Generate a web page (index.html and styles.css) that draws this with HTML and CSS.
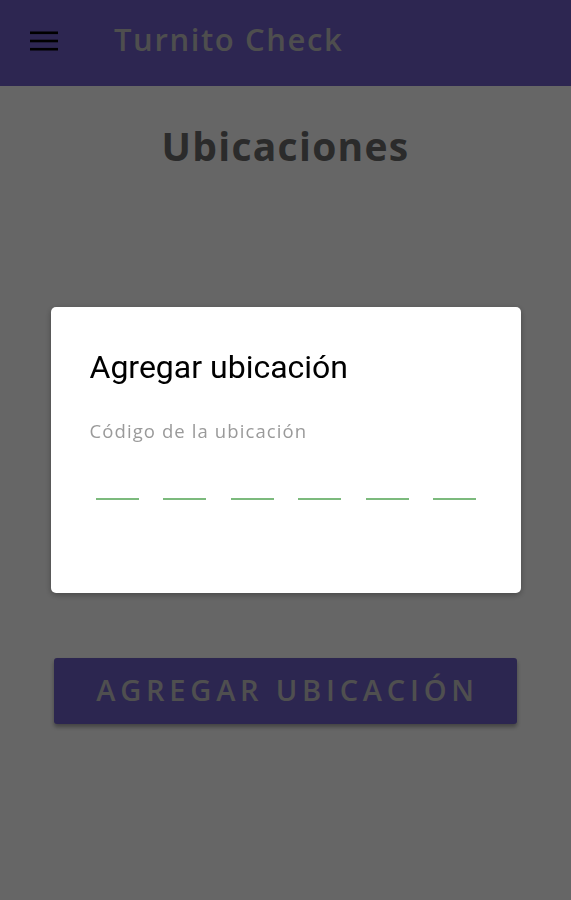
FILE: index.html
```html
<!DOCTYPE html>
<html lang="es">
<head>
<meta charset="utf-8">
<title>Turnito Check</title>
<link rel="stylesheet" href="styles.css">
</head>
<body>
<header class="appbar">
  <button class="menu" aria-label="menu">
    <svg width="28" height="20" viewBox="0 0 28 20"><rect x="0" y="0.5" width="28" height="2.6" fill="#000"/><rect x="0" y="8.7" width="28" height="2.6" fill="#000"/><rect x="0" y="16.9" width="28" height="2.6" fill="#000"/></svg>
  </button>
  <div class="brand">Turnito Check</div>
</header>
<main class="content">
  <h1 class="page-title">Ubicaciones</h1>
  <div class="spacer"></div>
  <button class="primary">AGREGAR UBICACIÓN</button>
</main>
<div class="overlay">
  <div class="dialog">
    <h2 class="dialog-title">Agregar ubicación</h2>
    <div class="label">Código de la ubicación</div>
    <div class="code">
      <span class="dash"></span><span class="dash"></span><span class="dash"></span><span class="dash"></span><span class="dash"></span><span class="dash"></span>
    </div>
  </div>
</div>
</body>
</html>
```
FILE: styles.css
```css
html, body { margin: 0; padding: 0; }
body {
  width: 571px;
  height: 900px;
  background: #ffffff;
  font-family: "Open Sans", "Noto Sans", sans-serif;
  overflow: hidden;
}
.appbar {
  height: 86px;
  background: #715fcb;
  display: flex;
  align-items: center;
  box-sizing: border-box;
  padding-left: 30px;
}
.menu {
  border: 0;
  background: none;
  padding: 0;
  width: 28px;
  height: 20px;
  display: flex;
  margin-top: -4px;
}
.brand {
  margin-left: 56px;
  margin-top: -8px;
  color: #c4c4c4;
  font-size: 31px;
  font-weight: 600;
  letter-spacing: 1.6px;
}
.content {
  display: flex;
  flex-direction: column;
  align-items: center;
}
.page-title {
  margin: 0;
  margin-top: 30px;
  font-size: 39px;
  font-weight: 700;
  line-height: 60px;
  color: #6c6c6c;
  letter-spacing: 1.3px;
}
.spacer { height: 482px; }
.primary {
  width: 463px;
  height: 66px;
  border: 0;
  border-radius: 3px;
  background: #6f5fc8;
  color: #c6c6c6;
  font-family: "Open Sans", "Noto Sans", sans-serif;
  font-size: 29px;
  font-weight: 600;
  letter-spacing: 4.8px;
  box-shadow: 0 3px 4px rgba(0,0,0,0.35);
  padding: 0 0 4px 4px;
}
.overlay {
  position: fixed;
  inset: 0;
  background: rgba(0,0,0,0.6);
  display: flex;
  align-items: center;
  justify-content: center;
}
.dialog {
  width: 470px;
  height: 286px;
  box-sizing: border-box;
  background: #ffffff;
  border-radius: 5px;
  padding: 38px 39px 0 39px;
  box-shadow: 0 2px 6px rgba(0,0,0,0.3);
}
.dialog-title {
  margin: 0;
  font-family: Roboto, "Liberation Sans", sans-serif;
  font-size: 32px;
  font-weight: 400;
  color: #000;
  line-height: 44px;
}
.label {
  margin-top: 30px;
  font-size: 18.5px;
  color: #9a9a9a;
  line-height: 24px;
  letter-spacing: 1.1px;
}
.code {
  display: flex;
  gap: 24.6px;
  padding-left: 6px;
  margin-top: 55px;
}
.dash {
  width: 43px;
  height: 2px;
  background: #7cba7d;
}
```
